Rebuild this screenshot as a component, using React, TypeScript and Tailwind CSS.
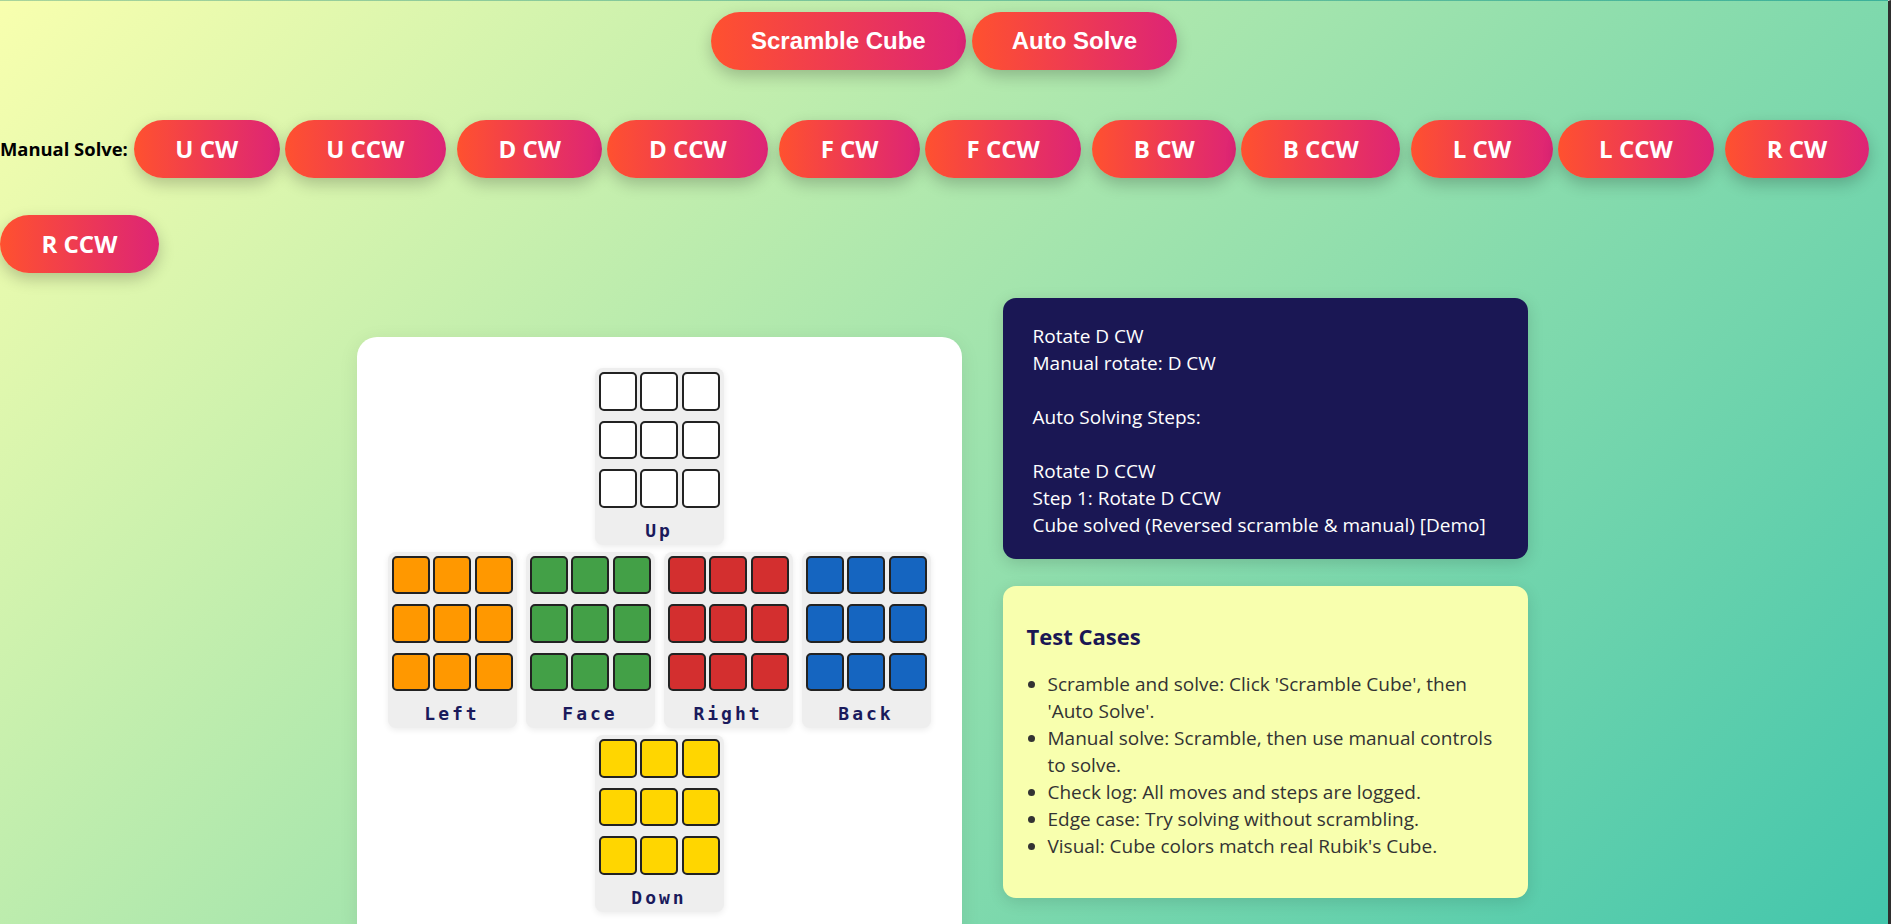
const faceColors: Record<string, string> = {
  W: "bg-white",
  O: "bg-[#ff9800]",
  G: "bg-[#43a047]",
  R: "bg-[#d32f2f]",
  B: "bg-[#1565c0]",
  Y: "bg-[#ffd600]",
};

const moves = ["U", "D", "F", "B", "L", "R"];

const logLines = [
  "Rotate D CW",
  "Manual rotate: D CW",
  "",
  "Auto Solving Steps:",
  "",
  "Rotate D CCW",
  "Step 1: Rotate D CCW",
  "Cube solved (Reversed scramble & manual) [Demo]",
];

const testCases = [
  "Scramble and solve: Click 'Scramble Cube', then 'Auto Solve'.",
  "Manual solve: Scramble, then use manual controls to solve.",
  "Check log: All moves and steps are logged.",
  "Edge case: Try solving without scrambling.",
  "Visual: Cube colors match real Rubik's Cube.",
];

function Face({ label, color }: { label: string; color: string }) {
  return (
    <div className="w-[129px] rounded-lg bg-[#eeeeee] px-[4px] pt-[4px] pb-[3px] shadow-[0_2px_6px_rgba(0,0,0,0.08)]">
      <div className="grid grid-cols-[repeat(3,38px)] justify-center gap-x-[3.5px] gap-y-[10px]">
        {Array.from({ length: 9 }).map((_, i) => (
          <div key={i} className={"h-[38.5px] rounded-[5px] border-2 border-[#222] " + faceColors[color]} />
        ))}
      </div>
      <div className="mt-[12px] text-center font-['DejaVu_Sans_Mono',monospace] text-[18px] font-bold leading-[22px] tracking-[3px] text-[#1a1a5c]">
        {label}
      </div>
    </div>
  );
}

function TopButton({ children }: { children: string }) {
  return (
    <button className="rounded-full bg-[linear-gradient(90deg,#ff512f,#dd2476)] px-10 py-[15px] font-['Liberation_Sans',Arial,sans-serif] text-[24px] font-bold leading-[28px] text-white shadow-[0_6px_16px_rgba(0,0,0,0.22)]">
      {children}
    </button>
  );
}

function MoveButton({ children, last }: { children: string; last?: boolean }) {
  return (
    <button
      className={
        "rounded-full bg-[linear-gradient(90deg,#ff512f,#dd2476)] px-[41.5px] py-[15px] text-[24px] font-bold leading-[28px] text-white shadow-[0_6px_16px_rgba(0,0,0,0.22)] " +
        (last ? "mr-[11px]" : "mr-[5px]")
      }
    >
      {children}
    </button>
  );
}

export default function App() {
  return (
    <div className="h-screen overflow-hidden border-t border-r-[3px] border-t-black/10 border-r-[#2e2e2e] bg-[linear-gradient(135deg,#f8ffae,#43c6ac)] font-['Open_Sans',sans-serif]">
      <div className="flex justify-center gap-[6px] pt-[11px]">
        <TopButton>Scramble Cube</TopButton>
        <TopButton>Auto Solve</TopButton>
      </div>

      <div className="mt-[50px] flex flex-wrap items-center gap-y-[37px]">
        <span className="mr-[6px] text-[18.4px] font-bold text-black">Manual Solve:</span>
        {moves.map((m) => (
          <>
            <MoveButton key={m + "cw"}>{m + " CW"}</MoveButton>
            <MoveButton key={m + "ccw"} last>
              {m + " CCW"}
            </MoveButton>
          </>
        ))}
      </div>

      <div className="mt-[25px] flex items-start justify-center gap-[41px] pr-[4px]">
        <div className="mt-[39px] w-[605px] rounded-[20px] bg-white px-[31px] pt-[31px] pb-[30px] shadow-[0_4px_20px_rgba(0,0,0,0.08)]">
          <div className="flex flex-col items-center gap-[7px]">
            <Face label="Up" color="W" />
            <div className="flex gap-[9px]">
              <Face label="Left" color="O" />
              <Face label="Face" color="G" />
              <Face label="Right" color="R" />
              <Face label="Back" color="B" />
            </div>
            <Face label="Down" color="Y" />
          </div>
        </div>

        <div className="flex w-[525px] flex-col gap-[27px]">
          <div className="rounded-[13px] bg-[#1a1754] px-[30px] pt-[25px] pb-[20px] text-[19px] leading-[27px] text-white shadow-[0_4px_16px_rgba(0,0,0,0.15)]">
            {logLines.map((l, i) => (
              <div key={i} className="h-[27px] whitespace-pre">
                {l}
              </div>
            ))}
          </div>

          <div className="rounded-[13px] bg-[#f8ffae] px-[24px] pt-[35px] pb-[38px] shadow-[0_4px_16px_rgba(0,0,0,0.12)]">
            <h3 className="mb-[20px] text-[22px] font-bold leading-[30px] text-[#1a1754]">Test Cases</h3>
            <ul className="list-disc pl-[21px] text-[19px] leading-[27px] text-[#333]">
              {testCases.map((t) => (
                <li key={t}>{t}</li>
              ))}
            </ul>
          </div>
        </div>
      </div>
    </div>
  );
}
